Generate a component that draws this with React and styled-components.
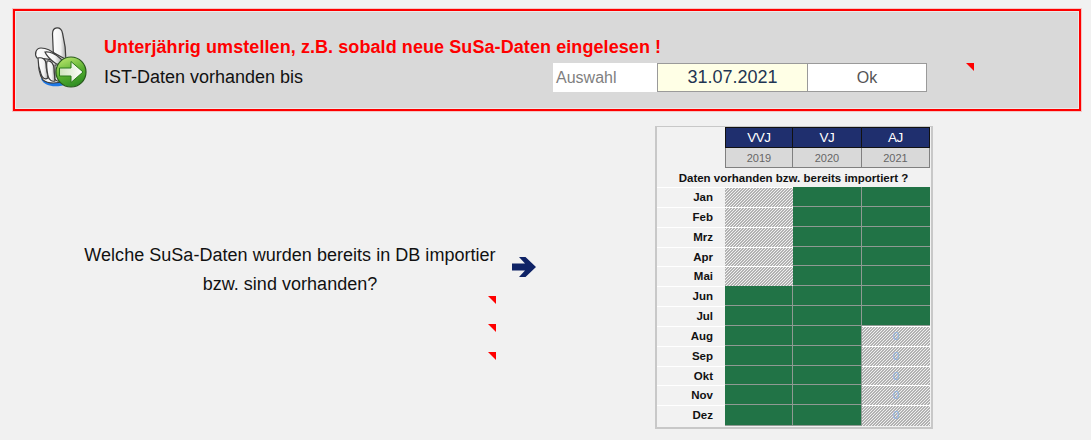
import styled, { createGlobalStyle } from 'styled-components';

const GlobalStyle = createGlobalStyle`
  html, body {
    margin: 0;
    background: #f1f1f1;
    font-family: "Liberation Sans", Arial, sans-serif;
  }
`;

const Page = styled.div`
  width: 1091px;
  height: 440px;
  overflow: hidden;
  padding: 9px 0 0 13px;
  box-sizing: border-box;
`;

// oberer roter Kasten
const Banner = styled.div`
  position: relative;
  width: 1068px;
  height: 102px;
  box-sizing: border-box;
  background: #d9d9d9;
  border: 2px solid #ff0000;
  box-shadow: 0 0 0 1px rgba(255, 0, 0, 0.18), inset 0 0 0 1px rgba(255, 255, 255, 0.45);
  display: flex;
  align-items: flex-start;
  padding: 16px 0 0 19px;
`;

const HandIcon = styled.svg`
  width: 54px;
  height: 62px;
  flex: none;
`;

const BannerBody = styled.div`
  margin-left: 16px;
  padding-top: 10px;
`;

const Headline = styled.div`
  font-size: 18px;
  line-height: 20px;
  font-weight: 700;
  letter-spacing: 0.08px;
  color: #ff0000;
  white-space: nowrap;
`;

const InputRow = styled.div`
  display: flex;
  align-items: center;
  margin-top: 6px;
`;

const InputLabel = styled.div`
  width: 449px;
  font-size: 18px;
  color: #111;
  white-space: nowrap;
`;

const Field = styled.div`
  height: 29px;
  box-sizing: border-box;
  display: flex;
  align-items: center;
  justify-content: ${p => (p.$left ? 'flex-start' : 'center')};
  padding-left: ${p => (p.$left ? '3px' : '0')};
  width: ${p => p.$w}px;
  background: ${p => p.$bg};
  color: ${p => p.$color};
  font-size: ${p => p.$size}px;
  border: ${p => (p.$plain ? 'none' : '1px solid #9a9a9a')};
  margin-left: ${p => (p.$overlap ? '-1px' : '0')};
`;

const Marker = styled.span`
  position: absolute;
  width: 8px;
  height: 8px;
  background: #ff0000;
  clip-path: polygon(0 0, 100% 0, 100% 100%);
`;

const BannerMarker = styled(Marker)`
  left: 951px;
  top: 52px;
`;

// unterer Bereich
const Content = styled.div`
  display: flex;
  align-items: flex-start;
  margin-top: 15px;
`;

const Question = styled.div`
  position: relative;
  width: 642px;
  height: 300px;
  flex: none;
  box-sizing: border-box;
  padding: 115px 0 0 67px;
  display: flex;
  align-items: flex-start;
`;

const QuestionText = styled.div`
  width: 420px;
  text-align: center;
  font-size: 18px;
  letter-spacing: 0.03px;
  line-height: 29px;
  color: #111;
  white-space: nowrap;
`;

const ArrowIcon = styled.svg`
  width: 24px;
  height: 20px;
  margin: 16px 0 0 12px;
  flex: none;
`;

const QuestionMarker = styled(Marker)`
  left: 475px;
  top: ${p => p.$top}px;
`;

const Table = styled.div`
  width: 278px;
  height: 303px;
  box-sizing: border-box;
  border: 2px solid #c8c8c8;
  border-top-width: 1px;
  padding-right: 1px;
  display: grid;
  grid-template-columns: 68px 68px 69px 68px;
  grid-template-rows: 21px 20px 19px 20px 20px 20px 19px 20px 20px 20px 20px 20px 19px 20px 21px;
  background: #f2f2f2;
`;

const HeadCell = styled.div`
  background: #1f2f6e;
  color: #fff;
  font-size: 13.5px;
  letter-spacing: -0.5px;
  display: flex;
  align-items: center;
  justify-content: center;
  box-sizing: border-box;
  border: 1px solid #111;
  border-left-width: ${p => (p.$first ? '1px' : '0')};
`;

const YearCell = styled.div`
  background: #d9d9d9;
  color: #666;
  font-size: 11px;
  display: flex;
  align-items: center;
  justify-content: center;
  box-sizing: border-box;
  border: 1px solid #808080;
  border-top: none;
  border-left-width: ${p => (p.$first ? '1px' : '0')};
`;

const Blank = styled.div``;

const TableTitle = styled.div`
  grid-column: 1 / -1;
  font-size: 11.5px;
  font-weight: 700;
  color: #111;
  display: flex;
  align-items: center;
  justify-content: center;
  white-space: nowrap;
`;

const Month = styled.div`
  font-size: 11.5px;
  font-weight: 700;
  color: #111;
  text-align: right;
  padding-right: 12px;
  box-sizing: border-box;
  line-height: 18px;
  border-top: 1px solid #fff;
`;

const GreenCell = styled.div`
  background: #217346;
  box-sizing: border-box;
  border-bottom: 1px solid #8f9a93;
  border-right: ${p => (p.$last ? 'none' : '1px solid #8f9a93')};
`;

const HatchCell = styled.div`
  box-sizing: border-box;
  border-top: 1px solid #fff;
  background-color: #e8e8e8;
  background-image: linear-gradient(
    135deg,
    #b2b2b2 25%,
    #f0f0f0 25%,
    #f0f0f0 50%,
    #b2b2b2 50%,
    #b2b2b2 75%,
    #f0f0f0 75%
  );
  background-size: 3px 3px;
  color: #8fb2e2;
  font-size: 11.5px;
  line-height: 19px;
  text-align: center;
`;

const YEARS = [
  { head: 'VVJ', year: '2019' },
  { head: 'VJ', year: '2020' },
  { head: 'AJ', year: '2021' },
];

// g = grün, h = schraffiert, z = schraffiert mit 0
const ROWS = [
  ['Jan', 'hgg'],
  ['Feb', 'hgg'],
  ['Mrz', 'hgg'],
  ['Apr', 'hgg'],
  ['Mai', 'hgg'],
  ['Jun', 'ggg'],
  ['Jul', 'ggg'],
  ['Aug', 'ggz'],
  ['Sep', 'ggz'],
  ['Okt', 'ggz'],
  ['Nov', 'ggz'],
  ['Dez', 'ggz'],
];

function Hand() {
  const outline = { stroke: '#3d3d3d', strokeWidth: 1.2, fill: 'url(#glove)' };
  return (
    <HandIcon viewBox="0 0 54 62">
      <defs>
        <linearGradient id="glove" x1="0" x2="1" y1="0" y2="0">
          <stop offset="0" stopColor="#ffffff" />
          <stop offset="0.6" stopColor="#f2f2f2" />
          <stop offset="1" stopColor="#a8a8a8" />
        </linearGradient>
        <linearGradient id="ball" x1="0.3" x2="0.7" y1="0" y2="1">
          <stop offset="0" stopColor="#b6e46a" />
          <stop offset="0.55" stopColor="#55ad2e" />
          <stop offset="1" stopColor="#2a8a22" />
        </linearGradient>
        <linearGradient id="arrowFill" x1="0" x2="1" y1="0" y2="0">
          <stop offset="0" stopColor="#cfe3bd" />
          <stop offset="1" stopColor="#ffffff" />
        </linearGradient>
      </defs>
      <path d="M7 52 C11 60 22 61 34 57 L32 50 L10 48 Z" fill="#1e78e6" />
      <path d="M19.5 30 L18.5 7 C18.5 -1 27 -1 28.5 6 C30.5 14 32 24 32 34 Z" {...outline} />
      <path d="M5 30 C4 38 5 47 9 53 C14 57 24 57 31 53 L35 34 L20 26 Z" {...outline} />
      <path d="M3 31 C0 27 2 21 7 21 C12 21 18 24 22 28 C25 31 21 36 17 33 C13 31 8 32 3 31 Z" {...outline} />
      <path d="M11 25 C15 24 22 27 27 32 C30 36 25 39 21 36 C17 33 13 30 11 25 Z" {...outline} />
      <path d="M4 31 C8 30 12 32 12 37 C12 43 14 47 14 51 C11 53 8 51 7 47 C5 42 4 36 4 31 Z" {...outline} />
      <path d="M13 34 C17 33 20 37 20 42 C20 46 21 50 21 54 C18 55 15 53 14 49 C13 44 12 39 13 34 Z" {...outline} />
      <path d="M21 38 C24 37 27 40 27 44 L27 53 C24 55 22 54 21 52 Z" {...outline} />
      <circle cx="37" cy="45" r="15" fill="url(#ball)" stroke="#28591c" strokeWidth="1.2" />
      <path d="M25.5 41 H37 V34.5 L49 45 L37 55.5 V49 H25.5 Z" fill="url(#arrowFill)" stroke="#2b7a1c" strokeWidth="1" />
    </HandIcon>
  );
}

function Arrow() {
  return (
    <ArrowIcon viewBox="0 0 24 20">
      <path d="M0 6.5 H13 L7 0 H13.5 L24 10 L13.5 20 H7 L13 13.5 H0 Z" fill="#0f2366" />
    </ArrowIcon>
  );
}

function Row({ name, cells }) {
  return (
    <>
      <Month>{name}</Month>
      {cells.split('').map((c, i) => {
        if (c === 'g') return <GreenCell key={i} $last={i === 2} />;
        return <HatchCell key={i}>{c === 'z' ? '0' : ''}</HatchCell>;
      })}
    </>
  );
}

function App() {
  return (
    <>
      <GlobalStyle />
      <Page>
        <Banner>
          <Hand />
          <BannerBody>
            <Headline>Unterjährig umstellen, z.B. sobald neue SuSa-Daten eingelesen !</Headline>
            <InputRow>
              <InputLabel>IST-Daten vorhanden bis</InputLabel>
              <Field $w={104} $bg="#fff" $color="#7f7f7f" $size={16} $left $plain>Auswahl</Field>
              <Field $w={151} $bg="#ffffe6" $color="#1f3552" $size={18}>31.07.2021</Field>
              <Field $w={120} $bg="#fff" $color="#555" $size={16} $overlap>Ok</Field>
            </InputRow>
          </BannerBody>
          <BannerMarker />
        </Banner>
        <Content>
          <Question>
            <QuestionText>
              Welche SuSa-Daten wurden bereits in DB importier
              <br />
              bzw. sind vorhanden?
            </QuestionText>
            <Arrow />
            <QuestionMarker $top={170} />
            <QuestionMarker $top={198} />
            <QuestionMarker $top={226} />
          </Question>
          <Table>
            <Blank />
            {YEARS.map((y, i) => (
              <HeadCell key={y.head} $first={i === 0}>{y.head}</HeadCell>
            ))}
            <Blank />
            {YEARS.map((y, i) => (
              <YearCell key={y.year} $first={i === 0}>{y.year}</YearCell>
            ))}
            <TableTitle>Daten vorhanden bzw. bereits importiert ?</TableTitle>
            {ROWS.map(([name, cells]) => (
              <Row key={name} name={name} cells={cells} />
            ))}
          </Table>
        </Content>
      </Page>
    </>
  );
}

export default App;
